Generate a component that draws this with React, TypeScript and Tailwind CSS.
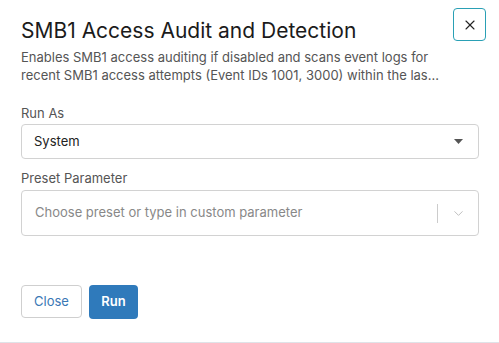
import { X, ChevronDown } from 'lucide-react';

export default function App() {
  return (
    <div className="w-[499px] h-[343px] bg-white border-b border-[#dfe3e8] relative overflow-hidden" style={{ fontFamily: 'Inter, sans-serif' }}>
      <button className="absolute right-[13px] top-[8px] w-[33px] h-[33px] flex items-center justify-center border border-[#2aa0b5] rounded-[4px] text-[#222]">
        <X className="w-4 h-4" strokeWidth={1.6} />
      </button>

      <div className="pl-[21px] pr-[20px] pt-[18px]">
        <h1 className="text-[21px] leading-[26px] text-[#1b1b1b] font-normal">SMB1 Access Audit and Detection</h1>
        <p className="mt-[4px] text-[13px] leading-[18px] text-[#555] pr-[30px]">
          Enables SMB1 access auditing if disabled and scans event logs for
          <br />
          recent SMB1 access attempts (Event IDs 1001, 3000) within the las...
        </p>

        <div className="mt-[21px]">
          <label className="block text-[13px] leading-[17px] text-[#555]">Run As</label>
          <div className="mt-[2px] h-[35px] border border-[#d2d2d2] rounded-[4px] flex items-center justify-between pl-[12px] pr-[15px]">
            <span className="text-[13px] text-[#222]">System</span>
            <svg width="9" height="5" viewBox="0 0 9 5"><path d="M0 0h9L4.5 5z" fill="#555" /></svg>
          </div>
        </div>

        <div className="mt-[11px]">
          <label className="block text-[13px] leading-[17px] text-[#555]">Preset Parameter</label>
          <div className="mt-[3px] h-[46px] border border-[#d2d2d2] rounded-[4px] flex items-center pl-[13px]">
            <span className="flex-1 text-[13px] text-[#888]">Choose preset or type in custom parameter</span>
            <div className="w-px h-[19px] bg-[#ccc]" />
            <div className="w-[40px] flex items-center justify-center text-[#bbb]">
              <ChevronDown className="w-[15px] h-[15px]" strokeWidth={1.5} />
            </div>
          </div>
        </div>

        <div className="mt-[49px] flex gap-[7px]">
          <button className="h-[33px] w-[61px] border border-[#cfcfcf] rounded-[4px] text-[13px] text-[#3a78b5]">Close</button>
          <button className="h-[34px] w-[49px] rounded-[4px] bg-[#2f7abb] text-[13px] font-semibold text-white">Run</button>
        </div>
      </div>
    </div>
  );
}
